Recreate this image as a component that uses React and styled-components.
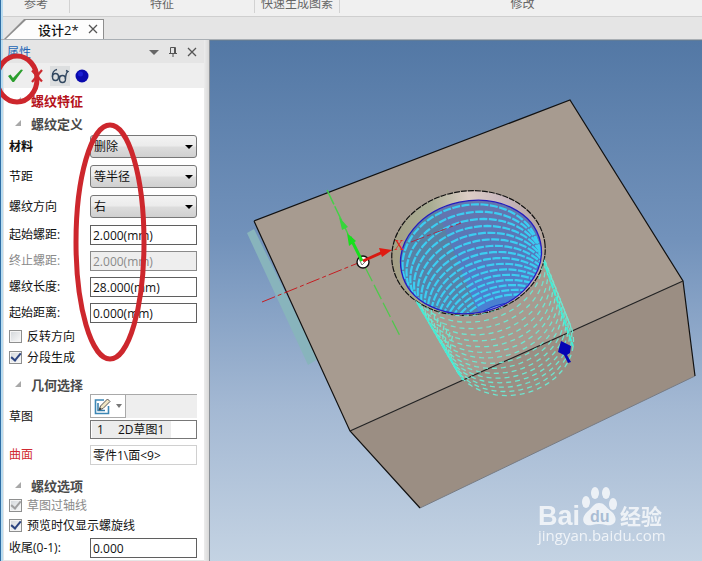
import React, { useState } from 'react';
import styled, { createGlobalStyle, ThemeProvider } from 'styled-components';

const theme = {
  font: '"Open Sans", "Noto Sans CJK SC", sans-serif',
  colors: {
    text: '#111111',
    muted: '#8a8a8a',
    ribbon: '#f0f0f0',
    chrome: '#e5e5e5',
    border: '#5f5f5f',
    required: '#d02a33',
    mark: '#cd272d',
  },
};

const GlobalStyle = createGlobalStyle`
  * {
    box-sizing: border-box;
  }

  body {
    margin: 0;
    font-family: ${theme.font};
    font-size: 12px;
    color: ${theme.colors.text};
  }

  button, input, select {
    font: inherit;
    color: inherit;
  }
`;

const Window = styled.div`
  position: relative;
  display: flex;
  flex-direction: column;
  min-height: 100vh;
  overflow: hidden;
  background: ${({ theme }) => theme.colors.chrome};
  border-left: 1px solid #2f6ea5;
  box-shadow: inset 2px 0 0 #b9dcf0;
`;

const Ribbon = styled.header`
  display: flex;
  height: 17px;
  margin-left: 2px;
  background: ${({ theme }) => theme.colors.ribbon};
  border-bottom: 1px solid #cfcfcf;
`;

const RibbonGroup = styled.div`
  flex: ${({ $width }) => ($width ? `0 0 ${$width}px` : '1')};
  height: 13px;
  padding-left: ${({ $width }) => ($width ? 0 : 4)}px;
  border-right: 1px solid ${({ $width }) => ($width ? '#d2d2d2' : 'transparent')};
  text-align: center;
  line-height: 8px;
  color: #666666;
`;

const TabBar = styled.nav`
  display: flex;
  height: 23px;
  padding: 2px 0 0 3px;
  border-bottom: 1px solid #a9afb4;
`;

const Tab = styled.div`
  position: relative;
  isolation: isolate;
  display: flex;
  align-items: center;
  gap: 8px;
  width: 100px;
  padding-left: 34px;
  font-size: 13px;
  font-weight: 500;

  &::before,
  &::after {
    content: '';
    position: absolute;
    inset: 0;
    z-index: -2;
    background: #8f8f8f;
    clip-path: polygon(0 100%, 20px 0, 100% 0, 100% 100%);
  }

  &::after {
    inset: 1px 1px 0 2px;
    z-index: -1;
    background: #fdfdfd;
  }
`;

const IconButton = styled.button`
  display: flex;
  align-items: center;
  justify-content: center;
  width: ${({ $size }) => $size || 12}px;
  height: ${({ $size }) => $size || 12}px;
  padding: 0;
  border: 0;
  background: ${({ $active }) => ($active ? '#dcdedf' : 'transparent')};
`;

const Workspace = styled.main`
  display: flex;
  flex: 1;
`;

const Panel = styled.aside`
  flex: 0 0 209px;
  padding: 0 5px 0 3px;
  background: linear-gradient(to right, transparent 203px, #ececec 203px, #d8d8d8 208px);
  border-right: 1px solid #8c9299;
`;

const PanelTitle = styled.div`
  display: flex;
  align-items: center;
  height: 23px;
  padding: 0 6px 0 3px;
  color: #2465b5;
`;

const PanelActions = styled.div`
  display: flex;
  gap: 7px;
  margin-left: auto;
`;

const Toolbar = styled.div`
  display: flex;
  align-items: center;
  gap: 3px;
  height: 25px;
  padding-left: 2px;
  background: #eeeeee;
`;

const PanelBody = styled.form`
  padding: 0 7px 2px 5px;
  background: #ffffff;
`;

const SectionTitle = styled.h2`
  display: flex;
  align-items: center;
  gap: 10px;
  height: ${({ $main }) => ($main ? 24 : 20)}px;
  margin: ${({ $gap }) => $gap || 0}px 0 0;
  padding-left: 6px;
  font-size: 13px;
  font-weight: 700;
  color: ${({ $main }) => ($main ? '#b5121b' : '#4a4a4a')};

  &::before {
    content: '';
    width: 6px;
    height: 6px;
    background: #a8a8a8;
    clip-path: polygon(100% 0, 100% 100%, 0 100%);
  }
`;

const FieldList = styled.div`
  display: flex;
  flex-direction: column;
  gap: ${({ $gap }) => $gap}px;
  margin-top: ${({ $top }) => $top || 0}px;
`;

const FieldRow = styled.div`
  display: grid;
  grid-template-columns: 81px 1fr;
  align-items: center;
`;

const Label = styled.label`
  font-weight: ${({ $bold }) => ($bold ? 700 : 400)};
  line-height: 20px;
  white-space: nowrap;
  color: ${({ $tone, theme }) => ($tone ? theme.colors[$tone] : 'inherit')};
`;

const Select = styled.select`
  appearance: none;
  display: block;
  width: 100%;
  height: 23px;
  padding: 0 16px 0 3px;
  border: 1px solid #777777;
  border-radius: 3px;
  background: linear-gradient(#f3f3f3, #ebebeb 48%, #dddddd 52%, #d0d0d0);
`;

const SelectWrapper = styled.div`
  position: relative;

  &::after {
    content: '';
    position: absolute;
    top: 10px;
    right: 4px;
    border: 4px solid transparent;
    border-top-color: #000000;
    border-bottom-width: 0;
    pointer-events: none;
  }
`;

const Input = styled.input`
  width: 100%;
  min-width: 0;
  height: 20px;
  padding: 0 2px;
  border: 1px solid ${({ $soft, theme }) => ($soft ? '#d0d0d0' : theme.colors.border)};
  border-radius: 0;
  background: #ffffff;

  &:disabled {
    color: ${({ theme }) => theme.colors.muted};
    background: #eeeeee;
    border-color: #8a8a8a;
  }
`;

const CheckLabel = styled.label`
  display: flex;
  align-items: center;
  gap: 5px;
  height: 20px;
  color: ${({ $disabled, theme }) => ($disabled ? theme.colors.muted : 'inherit')};
`;

const CheckInput = styled.input`
  appearance: none;
  display: grid;
  place-items: center;
  width: 13px;
  height: 13px;
  margin: 0;
  border: 1px solid #8e8f8f;
  background: linear-gradient(135deg, #d2d6da, #fafafa);
  box-shadow: inset 0 0 0 1px #f4f4f4;

  &:checked::after {
    content: '';
    width: 4px;
    height: 8px;
    border: solid ${({ disabled }) => (disabled ? '#a0a0a0' : '#2c4480')};
    border-width: 0 2px 2px 0;
    transform: translateY(-1px) rotate(40deg);
  }
`;

const SketchField = styled.div`
  display: flex;
  flex-direction: column;
  gap: 2px;
`;

const SketchTools = styled.div`
  display: flex;
  height: 24px;
  background: #eeeeee;
  border-top: 1px solid #a9a9a9;
`;

const SketchButton = styled.button`
  display: flex;
  align-items: center;
  gap: 5px;
  width: 36px;
  padding: 0 3px;
  border: 1px solid #a9a9a9;
  border-top: 0;
  background: #ffffff;
`;

const SketchList = styled.ol`
  margin: 0;
  padding: 0 25px 0 1px;
  list-style: none;
  border: 1px solid #777777;
`;

const SketchItem = styled.li`
  display: flex;
  gap: 14px;
  padding-left: 5px;
  line-height: 17px;
  background: #ececec;
`;

const Viewport = styled.section`
  flex: 1;
  min-width: 0;
  border-top: 1px solid #617c98;
  background: linear-gradient(#5378a5, #7292bb 38%, #a3b8d3 70%, #c4d3e3);
`;

const SceneSvg = styled.svg`
  display: block;
  width: 100%;
  height: 100%;
`;

const Annotations = styled.svg`
  position: absolute;
  top: 0;
  left: -1px;
  width: 150px;
  height: 370px;
  pointer-events: none;
`;

const CloseIcon = () => (
  <svg width="10" height="10" viewBox="0 0 10 10" stroke="#555" strokeWidth="1.3">
    <path d="M1 1L9 9M9 1L1 9" />
  </svg>
);

const SketchIcon = () => (
  <svg width="17" height="17" viewBox="0 0 17 17" fill="none">
    <path d="M10 2H1.5V15.500H14.500V8" stroke="#3d87b5" strokeWidth="1.6" />
    <path d="M4 5V12.500H11" stroke="#317caa" strokeWidth="1.5" />
    <path d="M5 12L6.500 8L13.500 1L16 3.500L9 10.500Z" fill="#f1e6c4" stroke="#555" />
    <path d="M5 12L6 9.500L7.500 11Z" fill="#333" />
  </svg>
);

const GlassesIcon = () => (
  <svg width="18" height="16" viewBox="0 0 18 16" fill="none" stroke="#30465f" strokeWidth="1.4">
    <ellipse cx="4.500" cy="9" rx="3" ry="3.500" />
    <ellipse cx="11.500" cy="11" rx="3" ry="3.500" />
    <path d="M1.500 9C1 5 3 2 6 1.500M7.500 9Q9 7.500 9.500 9M14.300 11C15 8 14.500 5 17 3.500L15 2.500" />
  </svg>
);

const SelectField = ({ id, label, options, bold }) => (
  <FieldRow>
    <Label htmlFor={id} $bold={bold}>{label}</Label>
    <SelectWrapper>
      <Select id={id}>
        {options.map((option) => (
          <option key={option}>{option}</option>
        ))}
      </Select>
    </SelectWrapper>
  </FieldRow>
);

const TextField = ({ id, label, value, tone, disabled = false, soft = false }) => (
  <FieldRow>
    <Label htmlFor={id} $tone={tone}>{label}</Label>
    <Input id={id} defaultValue={value} disabled={disabled} $soft={soft} />
  </FieldRow>
);

const CheckField = ({ label, initial = false, disabled = false }) => {
  const [checked, setChecked] = useState(initial);

  return (
    <CheckLabel $disabled={disabled}>
      <CheckInput
        type="checkbox"
        checked={checked}
        disabled={disabled}
        onChange={(e) => setChecked(e.target.checked)}
      />
      {label}
    </CheckLabel>
  );
};

const RING_COUNT = 16;
const TILT = (-12 * Math.PI) / 180;

// one turn of the thread, from angle a to angle b in degrees
const ringPath = (index, a, b) => {
  const t = index / (RING_COUNT - 1);
  const depth = t * (1.25 - 0.25 * t);
  const cx = 471 + 41 * depth;
  const cy = 259 + 85 * depth;
  const rx = 69 - 7 * depth;
  const ry = 55 - 5 * depth;
  const points = [];
  for (let deg = a; deg <= b; deg += 5) {
    const rad = (deg * Math.PI) / 180;
    const x = rx * Math.cos(rad);
    const y = ry * Math.sin(rad);
    const px = cx + x * Math.cos(TILT) - y * Math.sin(TILT);
    const py = cy + x * Math.sin(TILT) + y * Math.cos(TILT);
    points.push(`${px.toFixed(1)} ${py.toFixed(1)}`);
  }
  return `M${points.join('L')}`;
};

const rings = Array.from({ length: RING_COUNT }, (_, i) => i);

const Scene = () => (
  <SceneSvg viewBox="210 40 492 521" preserveAspectRatio="xMinYMin slice">
    <defs>
      <clipPath id="bore">
        <ellipse cx="471" cy="256" rx="71" ry="56" transform="rotate(-12 471 256)" />
      </clipPath>
      <clipPath id="rim">
        <ellipse cx="468.500" cy="252" rx="77" ry="62" transform="rotate(-8 468.500 252)" />
      </clipPath>
      <linearGradient id="chamfer">
        <stop offset="0" stopColor="#a49f86" />
        <stop offset="0.3" stopColor="#a9ad93" />
        <stop offset="0.55" stopColor="#dccdc5" />
        <stop offset="0.8" stopColor="#c6b4bd" />
        <stop offset="1" stopColor="#b5a59b" />
      </linearGradient>
      <linearGradient id="wall" x1="0" y1="0" x2="0" y2="1">
        <stop offset="0" stopColor="#6f72a5" />
        <stop offset="0.4" stopColor="#5878b8" />
        <stop offset="1" stopColor="#4583dc" />
      </linearGradient>
    </defs>

    <path d="M247 232L254 228L318 358L308 364Z" fill="#88b4bc" />
    <path d="M254 220L570 99L683 280L350 430Z" fill="#a79b90" />
    <path d="M350 430L683 280L695 375L420 507Z" fill="#9b8e83" />
    <path d="M420 507L695 375" stroke="#777b83" />
    <path d="M254 220L570 99L683 280L695 375M254 220L350 430L420 507" fill="none" stroke="#111" strokeWidth="1.2" />
    <path d="M350 430L683 280" stroke="#222" strokeWidth="1.2" />

    <ellipse cx="468.500" cy="252" rx="77" ry="62" transform="rotate(-8 468.500 252)" fill="url(#chamfer)" />
    <g clipPath="url(#rim)">
      <g clipPath="url(#bore)">
        <path d="M390 180H550V330H390Z" fill="url(#wall)" />
        <path d="M390 180H425L482 320H390Z" fill="#5a849b" opacity="0.7" />
        {rings.map((i) => (
          <path key={i} d={ringPath(i, 175, 370)} fill="none" stroke="#3ccdf2" strokeWidth="2.2" strokeDasharray="8 1.5" />
        ))}
        <ellipse cx="500" cy="315" rx="27" ry="11" transform="rotate(-18 500 315)" fill="#879be0" stroke="#1738c8" />
      </g>
      <ellipse cx="471" cy="256" rx="71" ry="56" transform="rotate(-12 471 256)" fill="none" stroke="#241cc0" strokeWidth="1.3" />
    </g>
    <ellipse cx="468.500" cy="252" rx="77" ry="62" transform="rotate(-8 468.500 252)" fill="none" stroke="#111" strokeWidth="1.2" strokeDasharray="6 1" />

    <mask id="outside">
      <path d="M210 40H702V561H210Z" fill="#fff" />
      <ellipse cx="468.500" cy="252" rx="77" ry="62" transform="rotate(-8 468.500 252)" fill="#000" />
    </mask>
    <g mask="url(#outside)">
      {rings.map((i) => (
        <path key={i} d={ringPath(i, -15, 205)} fill="none" stroke="#6fe5cf" strokeWidth="1.3" strokeDasharray="5 4" />
      ))}
      <path d="M417 301L463 379M543 258L573 345" stroke="#43edd6" strokeWidth="2" strokeDasharray="7 1" />
    </g>

    <path d="M262 301L363 260" stroke="#c51d22" strokeDasharray="14 3 4 3" />
    <path d="M411 241L461 222" stroke="#a62b48" strokeDasharray="14 3 4 3" />
    <path d="M327 189L348 233" stroke="#45d048" strokeWidth="1.5" strokeDasharray="16 2" />
    <path d="M365 266L401 337" stroke="#50c84c" strokeWidth="1.3" strokeDasharray="16 4" />
    <path d="M339 216L348 226L342 229Z" fill="#35d63a" />
    <circle cx="363" cy="261" r="6" fill="#fff" stroke="#111" strokeWidth="1.4" />
    <path d="M359 258L362 264L368 258" fill="none" stroke="#777" />
    <path d="M362 260L350 236" stroke="#17df1d" strokeWidth="3" />
    <path d="M347 232L356 240L349 245Z" fill="#17df1d" />
    <path d="M363 260L383 251" stroke="#d71911" strokeWidth="3" />
    <path d="M379 247L392 249L382 256Z" fill="#e01b12" />
    <text x="394" y="249" fontFamily="Liberation Serif, serif" fontSize="14" fill="#e0241b">X</text>

    <path d="M561 340L571 345L570 352L567 354L571 361L568 362L564 354L558 351Z" fill="#0504b4" />

    <g fill="#fff" opacity="0.75">
      <text x="538" y="524" fontFamily="Liberation Sans, sans-serif" fontSize="27" fontWeight="700">Bai</text>
      <ellipse cx="586" cy="501" rx="4" ry="6" />
      <ellipse cx="595" cy="492" rx="4" ry="6" />
      <ellipse cx="606" cy="492" rx="4" ry="6" />
      <ellipse cx="613" cy="503" rx="4" ry="6" />
      <path d="M599 502C594 502 592 507 587 511C579 519 585 526 592 524Q599 522 606 524C615 526 619 518 612 511C606 507 605 502 599 502Z" />
      <text x="620" y="523" fontFamily="Noto Sans CJK SC, sans-serif" fontSize="21" fontWeight="700">经验</text>
      <text x="538" y="540" fontFamily="Open Sans, sans-serif" fontSize="15">jingyan.baidu.com</text>
    </g>
    <text x="590" y="521" fontFamily="Liberation Sans, sans-serif" fontSize="16" fontWeight="700" fill="#a9bdd4">du</text>
  </SceneSvg>
);

const App = () => {
  return (
    <ThemeProvider theme={theme}>
      <GlobalStyle />
      <Window>
        <Ribbon>
          <RibbonGroup $width={67}>参考</RibbonGroup>
          <RibbonGroup $width={185}>特征</RibbonGroup>
          <RibbonGroup $width={85}>快速生成图素</RibbonGroup>
          <RibbonGroup>修改</RibbonGroup>
        </Ribbon>
        <TabBar>
          <Tab>
            设计2*
            <IconButton type="button" aria-label="关闭设计"><CloseIcon /></IconButton>
          </Tab>
        </TabBar>
        <Workspace>
          <Panel>
            <PanelTitle>
              属性
              <PanelActions>
                <IconButton type="button" aria-label="菜单">
                  <svg width="10" height="10" viewBox="0 0 10 10" fill="#666"><path d="M0 3H10L5 8Z" /></svg>
                </IconButton>
                <IconButton type="button" aria-label="固定">
                  <svg width="10" height="12" viewBox="0 0 10 12" fill="none" stroke="#555">
                    <path d="M2.500 1.500H7.500V7M2.500 1.500V7M6.500 2V7M1 7.500H9M5 8V11" />
                  </svg>
                </IconButton>
                <IconButton type="button" aria-label="关闭"><CloseIcon /></IconButton>
              </PanelActions>
            </PanelTitle>
            <Toolbar>
              <IconButton type="button" aria-label="确定" $size={18}>
                <svg width="16" height="16" viewBox="0 0 16 16"><path d="M1 8L3.500 6.500L6 10L14 1.500L16 2L7 14H5.500Z" fill="#2b9e2d" /></svg>
              </IconButton>
              <IconButton type="button" aria-label="取消" $size={20}>
                <svg width="14" height="16" viewBox="0 0 14 16" fill="none" stroke="#cc2b30" strokeWidth="2.2"><path d="M2 2.500L12 13.500M12 2L2 14" /></svg>
              </IconButton>
              <IconButton type="button" aria-label="预览" $size={20} $active><GlassesIcon /></IconButton>
              <IconButton type="button" aria-label="应用" $size={18}>
                <svg width="14" height="14" viewBox="0 0 14 14"><circle cx="7" cy="7" r="6.500" fill="#0a0aae" /><circle cx="5.500" cy="5" r="2.500" fill="#1a1ed4" /></svg>
              </IconButton>
            </Toolbar>
            <PanelBody>
              <SectionTitle $main>螺纹特征</SectionTitle>
              <SectionTitle $gap={1}>螺纹定义</SectionTitle>
              <FieldList $gap={7} $top={2}>
                <SelectField id="material" label="材料" options={['删除', '增加']} bold />
                <SelectField id="pitch" label="节距" options={['等半径', '变半径']} />
                <SelectField id="direction" label="螺纹方向" options={['右', '左']} />
              </FieldList>
              <FieldList $gap={6} $top={7}>
                <TextField id="startPitch" label="起始螺距:" value="2.000(mm)" />
                <TextField id="endPitch" label="终止螺距:" value="2.000(mm)" tone="muted" disabled />
                <TextField id="length" label="螺纹长度:" value="28.000(mm)" />
                <TextField id="offset" label="起始距离:" value="0.000(mm)" />
              </FieldList>
              <FieldList $gap={1} $top={3}>
                <CheckField label="反转方向" />
                <CheckField label="分段生成" initial />
              </FieldList>
              <SectionTitle $gap={7}>几何选择</SectionTitle>
              <FieldList $gap={6}>
                <FieldRow>
                  <Label htmlFor="sketch">草图</Label>
                  <SketchField>
                    <SketchTools>
                      <SketchButton id="sketch" type="button">
                        <SketchIcon />
                        <svg width="6" height="4" viewBox="0 0 6 4" fill="#777"><path d="M0 0H6L3 4Z" /></svg>
                      </SketchButton>
                    </SketchTools>
                    <SketchList>
                      <SketchItem>
                        <span>1</span>
                        <span>2D草图1</span>
                      </SketchItem>
                    </SketchList>
                  </SketchField>
                </FieldRow>
                <TextField id="face" label="曲面" value="零件1\面<9>" tone="required" soft />
              </FieldList>
              <SectionTitle $gap={10}>螺纹选项</SectionTitle>
              <FieldList $gap={0}>
                <CheckField label="草图过轴线" initial disabled />
                <CheckField label="预览时仅显示螺旋线" initial />
              </FieldList>
              <FieldList $gap={6} $top={3}>
                <TextField id="ending" label="收尾(0-1):" value="0.000" />
              </FieldList>
            </PanelBody>
          </Panel>
          <Viewport aria-label="三维视图">
            <Scene />
          </Viewport>
        </Workspace>
        <Annotations viewBox="0 0 150 370" fill="none" stroke={theme.colors.mark} strokeWidth="5">
          <ellipse cx="17" cy="79" rx="20" ry="23" />
          <ellipse cx="110" cy="242" rx="34" ry="117" />
        </Annotations>
      </Window>
    </ThemeProvider>
  );
};

export default App;
